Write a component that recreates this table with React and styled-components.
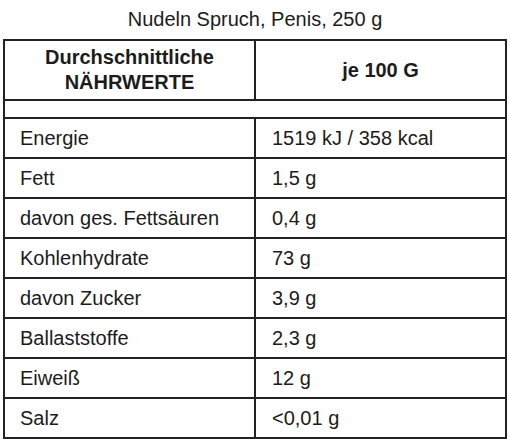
import React from "react";
import styled, { createGlobalStyle } from "styled-components";

const GlobalStyle = createGlobalStyle`
  body {
    margin: 0;
    background: #ffffff;
    font-family: "Liberation Sans", Arial, sans-serif;
    color: #1c1c1c;
  }
`;

const Page = styled.div`
  width: 510px;
  height: 447px;
  background: #ffffff;
`;

const Title = styled.div`
  height: 39px;
  line-height: 39px;
  font-size: 20px;
  text-align: center;
`;

const Table = styled.div`
  margin-left: 3px;
  width: 504px;
  box-sizing: border-box;
  border-top: 2px solid #222;
  border-left: 2px solid #222;
  display: grid;
  grid-template-columns: 1fr 1fr;
`;

const Cell = styled.div`
  box-sizing: border-box;
  height: ${(p) => p.$h}px;
  border-right: 2px solid #222;
  border-bottom: 2px solid #222;
  font-family: "Liberation Sans", Arial, sans-serif;
  font-size: 20px;
  font-weight: ${(p) => (p.$head ? 700 : 400)};
  display: flex;
  align-items: center;
  justify-content: ${(p) => (p.$head ? "center" : "flex-start")};
  text-align: ${(p) => (p.$head ? "center" : "left")};
  line-height: 25px;
  padding: 0 ${(p) => (p.$head ? 0 : p.$pad)}px;
  white-space: nowrap;
`;

const Spacer = styled(Cell)`
  grid-column: 1 / span 2;
`;

const rows = [
  ["Energie", "1519 kJ / 358 kcal"],
  ["Fett", "1,5 g"],
  ["davon ges. Fettsäuren", "0,4 g"],
  ["Kohlenhydrate", "73 g"],
  ["davon Zucker", "3,9 g"],
  ["Ballaststoffe", "2,3 g"],
  ["Eiweiß", "12 g"],
  ["Salz", "<0,01 g"],
];

export default function App() {
  return (
    <Page>
      <GlobalStyle />
      <Title>Nudeln Spruch, Penis, 250 g</Title>
      <Table>
        <Cell $head $h={60}>
          Durchschnittliche
          <br />
          NÄHRWERTE
        </Cell>
        <Cell $head $h={60}>
          je 100 G
        </Cell>
        <Spacer $h={18} />
        {rows.map(([label, value]) => (
          <React.Fragment key={label}>
            <Cell $h={40} $pad={15}>
              {label}
            </Cell>
            <Cell $h={40} $pad={16}>
              {value}
            </Cell>
          </React.Fragment>
        ))}
      </Table>
    </Page>
  );
}
